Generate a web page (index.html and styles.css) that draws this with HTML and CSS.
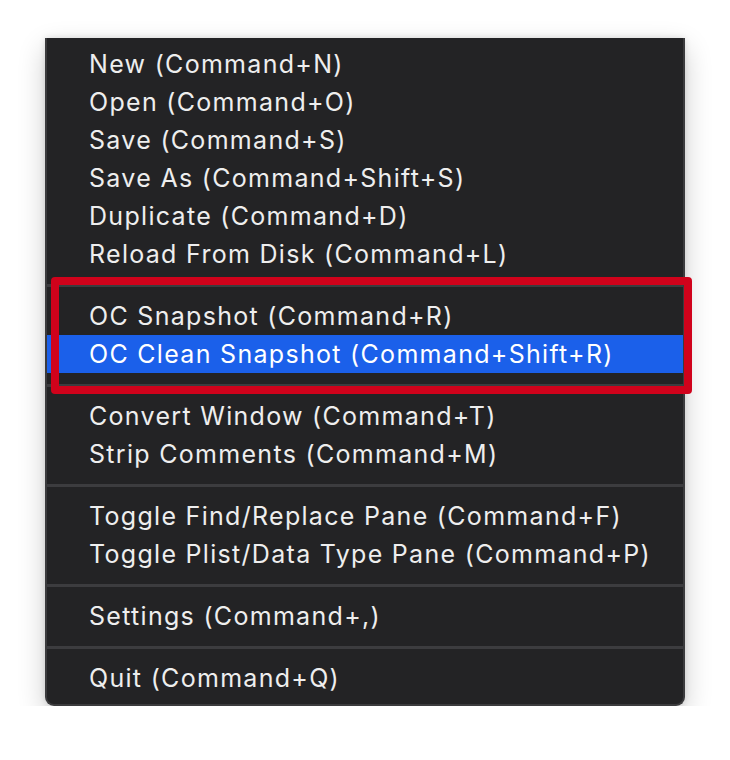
FILE: index.html
```html
<!DOCTYPE html>
<html>
<head>
<meta charset="utf-8">
<link rel="stylesheet" href="styles.css">
</head>
<body>
<div class="stage">
  <div class="menu">
    <div class="item">New (Command+N)</div>
    <div class="item">Open (Command+O)</div>
    <div class="item">Save (Command+S)</div>
    <div class="item">Save As (Command+Shift+S)</div>
    <div class="item">Duplicate (Command+D)</div>
    <div class="item">Reload From Disk (Command+L)</div>
    <div class="sep"></div>
    <div class="item">OC Snapshot (Command+R)</div>
    <div class="item active">OC Clean Snapshot (Command+Shift+R)</div>
    <div class="sep"></div>
    <div class="item">Convert Window (Command+T)</div>
    <div class="item">Strip Comments (Command+M)</div>
    <div class="sep"></div>
    <div class="item">Toggle Find/Replace Pane (Command+F)</div>
    <div class="item">Toggle Plist/Data Type Pane (Command+P)</div>
    <div class="sep"></div>
    <div class="item">Settings (Command+,)</div>
    <div class="sep"></div>
    <div class="item">Quit (Command+Q)</div>
    <div class="highlight-box"></div>
  </div>
</div>
</body>
</html>
```
FILE: styles.css
```css
html, body {
  margin: 0;
  padding: 0;
  background: #ffffff;
}
.stage {
  padding: 38px 0 0 45px;
}
.menu {
  position: relative;
  width: 636px;
  background: #232325;
  border: 2px solid #3b3b3d;
  border-top: none;
  border-radius: 0 0 9px 9px;
  padding: 7px 0 7px 0;
  box-shadow: 0 10px 28px rgba(0, 0, 0, 0.2), 0 0 6px rgba(0, 0, 0, 0.12);
  font-family: Inter, "Noto Sans", sans-serif;
  font-size: 25px;
  letter-spacing: 1.3px;
  color: #eeeeee;
}
.item {
  height: 38px;
  line-height: 39px;
  padding-left: 42px;
  white-space: nowrap;
}
.item.active {
  background: #1b60ea;
  color: #ffffff;
}
.sep {
  height: 24px;
  display: flex;
  align-items: center;
}
.sep::before {
  content: "";
  display: block;
  width: 100%;
  height: 3px;
  background: #3c3c3f;
}
.highlight-box {
  position: absolute;
  left: 4px;
  top: 239px;
  width: 625px;
  height: 101px;
  border: 8px solid #d0021b;
  border-radius: 4px;
}
```
